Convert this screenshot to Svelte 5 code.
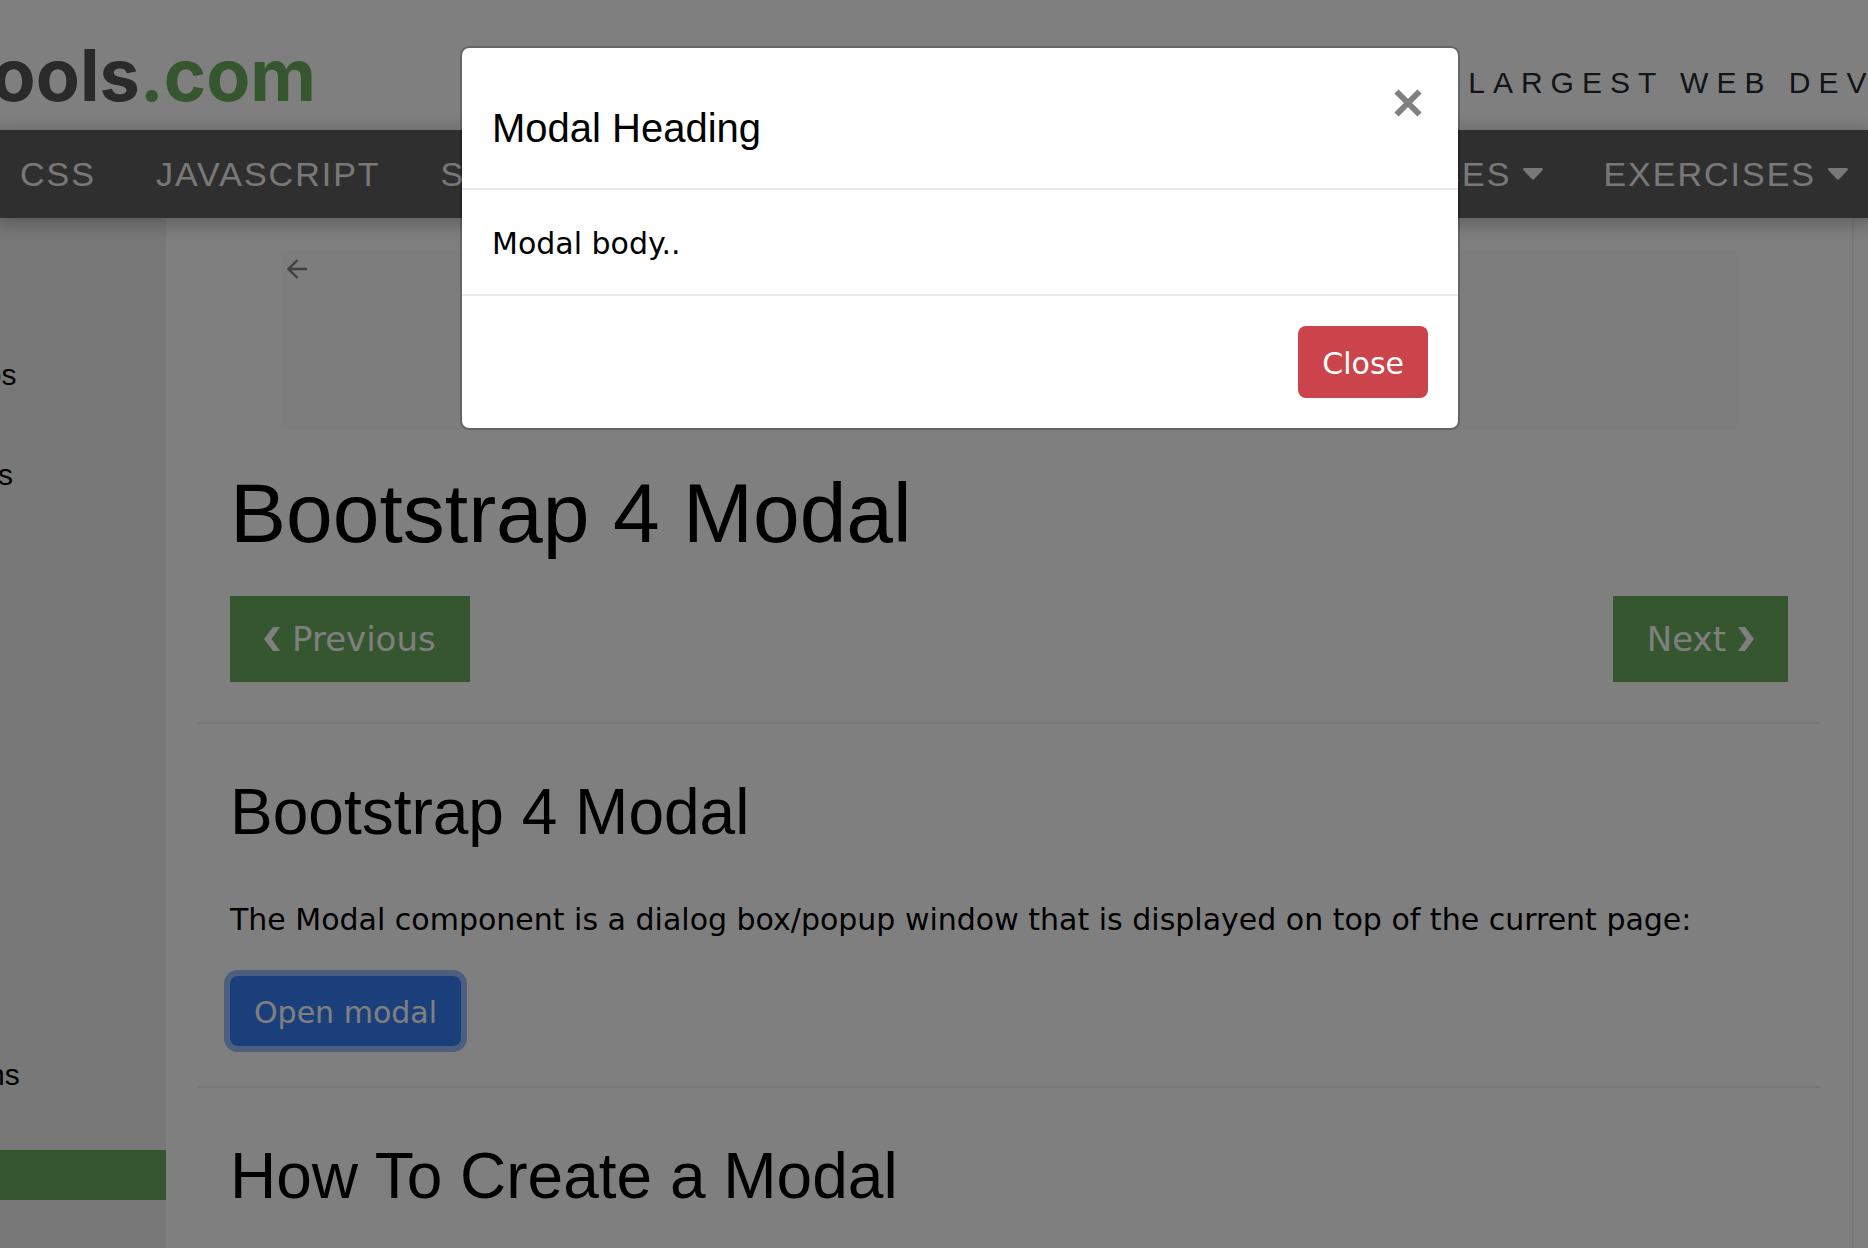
<script>
  let open = $state(true);

  const lessons = [
    'Jumbotron', 'Alerts', 'Buttons', 'Button Groups', 'Badges', 'Progress Bars',
    'Spinners', 'Pagination', 'List Groups', 'Cards', 'Dropdowns', 'Collapse',
    'Navs', 'Navbar', 'Forms', 'Inputs', 'Input Groups', 'Custom Forms',
    'Carousel', 'Modal', 'Tooltip'
  ];
  const topics = ['CSS', 'JAVASCRIPT', 'SQL'];
  const menus = ['REFERENCES', 'EXERCISES'];
</script>

<div class="page">
  <header class="masthead">
    <a class="logo" href="#home">w3schools<span>.com</span></a>
    <div class="slogan">THE WORLD'S LARGEST WEB DEVELOPER SITE</div>
  </header>

  <nav class="topnav" aria-label="Topics">
    <div class="group">
      {#each topics as topic}
        <a href="#{topic}">{topic}</a>
      {/each}
    </div>
    <div class="group">
      {#each menus as menu}
        <a href="#{menu}">
          {menu}
          <svg class="caret" viewBox="0 0 20 12" aria-hidden="true">
            <path d="M1.500 0h17c1.300 0 1.900 1.400 1 2.300l-8.200 8.600c-.7.700-1.900.700-2.600 0L.5 2.300C-.4 1.400.2 0 1.500 0z" />
          </svg>
        </a>
      {/each}
    </div>
  </nav>

  <div class="columns">
    <nav class="sidebar" aria-label="Lessons">
      <ul>
        {#each lessons as lesson}
          <li><a href="#{lesson}" class:active={lesson === 'Modal'}>BS4 {lesson}</a></li>
        {/each}
      </ul>
    </nav>

    <main>
      <div class="ad">
        <svg viewBox="0 0 20 20" aria-hidden="true">
          <path d="M20 10H1.500M10.500 1L1.500 10l9 9" />
        </svg>
      </div>
      <div class="inner">
        <h1>Bootstrap 4 Modal</h1>
        <div class="pager">
          <a href="#previous">
            <svg viewBox="0 0 16 24" aria-hidden="true"><path d="M16 0H9L0 12l9 12h7L7.500 12z" /></svg>
            Previous
          </a>
          <a href="#next">
            Next
            <svg viewBox="0 0 16 24" aria-hidden="true"><path d="M0 0h7l9 12-9 12H0l8.500-12z" /></svg>
          </a>
        </div>
      </div>
      <hr />
      <div class="inner">
        <h2>Bootstrap 4 Modal</h2>
        <p>The Modal component is a dialog box/popup window that is displayed on top of the current page:</p>
        <button class="btn primary" type="button" onclick={() => (open = true)}>Open modal</button>
      </div>
      <hr />
      <div class="inner">
        <h2>How To Create a Modal</h2>
      </div>
    </main>
  </div>

  {#if open}
    <div class="backdrop">
      <div class="modal" role="dialog" aria-modal="true" aria-labelledby="modal-title">
        <div class="modal-header">
          <h4 id="modal-title">Modal Heading</h4>
          <button class="dismiss" type="button" aria-label="Dismiss" onclick={() => (open = false)}>
            <svg viewBox="0 0 28 28" aria-hidden="true"><path d="M2.500 2.500l23 23M25.500 2.500l-23 23" /></svg>
          </button>
        </div>
        <div class="modal-body">Modal body..</div>
        <div class="modal-footer">
          <button class="btn danger" type="button" onclick={() => (open = false)}>Close</button>
        </div>
      </div>
    </div>
  {/if}
</div>

<style>
  :global(body) {
    margin: 0;
    background: #fff;
  }

  .page {
    position: relative;
    height: 100vh;
    overflow: hidden;
    display: flex;
    flex-direction: column;
    background: #fff;
    color: #000;
    font-family: Verdana, 'DejaVu Sans', sans-serif;
    font-size: 30px;
    line-height: 44px;
  }

  .page * {
    box-sizing: border-box;
  }

  a {
    color: inherit;
    text-decoration: none;
  }

  .masthead {
    display: grid;
    grid-template-columns: minmax(0, 62fr) minmax(0, 38fr);
    align-items: end;
    height: 130px;
    flex: none;
    padding-bottom: 25px;
    white-space: nowrap;
    font-family: 'Liberation Sans', Arial, sans-serif;
  }

  .logo {
    display: flex;
    justify-content: flex-end;
    width: 316px;
    color: #545454;
    font-family: Inter, sans-serif;
    font-size: 72px;
    font-weight: 700;
    line-height: 60px;
  }

  .logo span {
    color: #6aac5e;
  }

  .slogan {
    color: #24282c;
    letter-spacing: 8px;
  }

  .topnav {
    position: relative;
    display: flex;
    justify-content: space-between;
    flex: none;
    margin: 0 -10px;
    background: #5f5f5f;
    color: #f1f1f1;
    font-family: 'Liberation Sans', Arial, sans-serif;
    font-size: 34px;
    letter-spacing: 2px;
    line-height: 88px;
    box-shadow: 0 4px 20px rgba(0, 0, 0, 0.3);
  }

  .group {
    display: flex;
  }

  .group a {
    display: flex;
    align-items: center;
    gap: 12px;
    padding: 0 30px;
  }

  .caret {
    width: 20px;
    height: 12px;
    fill: currentColor;
  }

  .columns {
    display: flex;
    flex: 1;
    min-height: 0;
  }

  .sidebar {
    flex: none;
    width: 440px;
    margin-left: -274px;
    padding-top: 32px;
    overflow: hidden;
    background: #f1f1f1;
    font-family: 'Liberation Sans', Arial, sans-serif;
    line-height: 50px;
  }

  .sidebar ul {
    list-style: none;
    margin: 0;
    padding: 0;
  }

  .sidebar li:first-child {
    margin-top: -50px;
  }

  .sidebar a {
    display: block;
    padding: 0 32px;
  }

  .sidebar a.active {
    background: #6aac5e;
    color: #fff;
  }

  main {
    flex: 1;
    min-width: 0;
    margin-right: 14px;
    padding: 32px 32px 0;
    border-right: 2px solid #f1f1f1;
  }

  .inner {
    padding: 0 32px;
  }

  .ad {
    max-width: 1456px;
    height: 180px;
    margin: 0 auto;
    padding: 9px 6px;
    background: #fbfbfb;
    line-height: 0;
  }

  .ad svg {
    width: 20px;
    height: 20px;
    fill: none;
    stroke: #808080;
    stroke-width: 2.4;
  }

  h1,
  h2,
  h4 {
    margin: 0;
    font-family: 'Liberation Sans', Arial, sans-serif;
    font-weight: 400;
  }

  h1 {
    margin: 20px 0;
    font-size: 84px;
    line-height: 126px;
  }

  h2 {
    margin-bottom: 36px;
    font-size: 64px;
    line-height: 96px;
  }

  p {
    margin: 0 0 32px;
    line-height: 48px;
  }

  hr {
    margin: 40px 0;
    border: 0;
    border-top: 2px solid #eee;
  }

  .pager {
    display: flex;
    justify-content: space-between;
  }

  .pager a {
    display: flex;
    align-items: center;
    gap: 12px;
    padding: 0 34px;
    background: #6aac5e;
    color: #fff;
    font-size: 34px;
    line-height: 86px;
  }

  .pager svg {
    width: 16px;
    height: 24px;
    fill: currentColor;
  }

  .btn {
    display: block;
    padding: 4px 24px 0;
    border: 0;
    border-radius: 8px;
    color: #fff;
    font: inherit;
    line-height: 68px;
  }

  .primary {
    background: #347ef6;
    box-shadow: 0 0 0 6px #9abeff;
    line-height: 66px;
  }

  .danger {
    background: #cb444b;
  }

  .backdrop {
    position: absolute;
    inset: 0;
    display: flex;
    justify-content: center;
    align-items: flex-start;
    padding: 46px 0 0 52px;
    background: rgba(0, 0, 0, 0.5);
  }

  .modal {
    width: 1000px;
    max-width: 90%;
    border: 2px solid rgba(0, 0, 0, 0.2);
    border-radius: 9px;
    background: #fff;
    background-clip: padding-box;
  }

  .modal-header {
    display: flex;
    justify-content: space-between;
    align-items: flex-start;
    padding: 30px 28px 30px 30px;
    border-bottom: 2px solid #e9e9ef;
  }

  h4 {
    margin-top: 20px;
    font-size: 40px;
    line-height: 60px;
  }

  .dismiss {
    display: flex;
    padding: 11px 8px;
    border: 0;
    background: none;
  }

  .dismiss svg {
    width: 28px;
    height: 28px;
    fill: none;
    stroke: #808080;
    stroke-width: 6;
  }

  .modal-body {
    padding: 32px 30px 28px;
  }

  .modal-footer {
    display: flex;
    justify-content: flex-end;
    padding: 30px;
    border-top: 2px solid #e9e9ef;
  }
</style>
